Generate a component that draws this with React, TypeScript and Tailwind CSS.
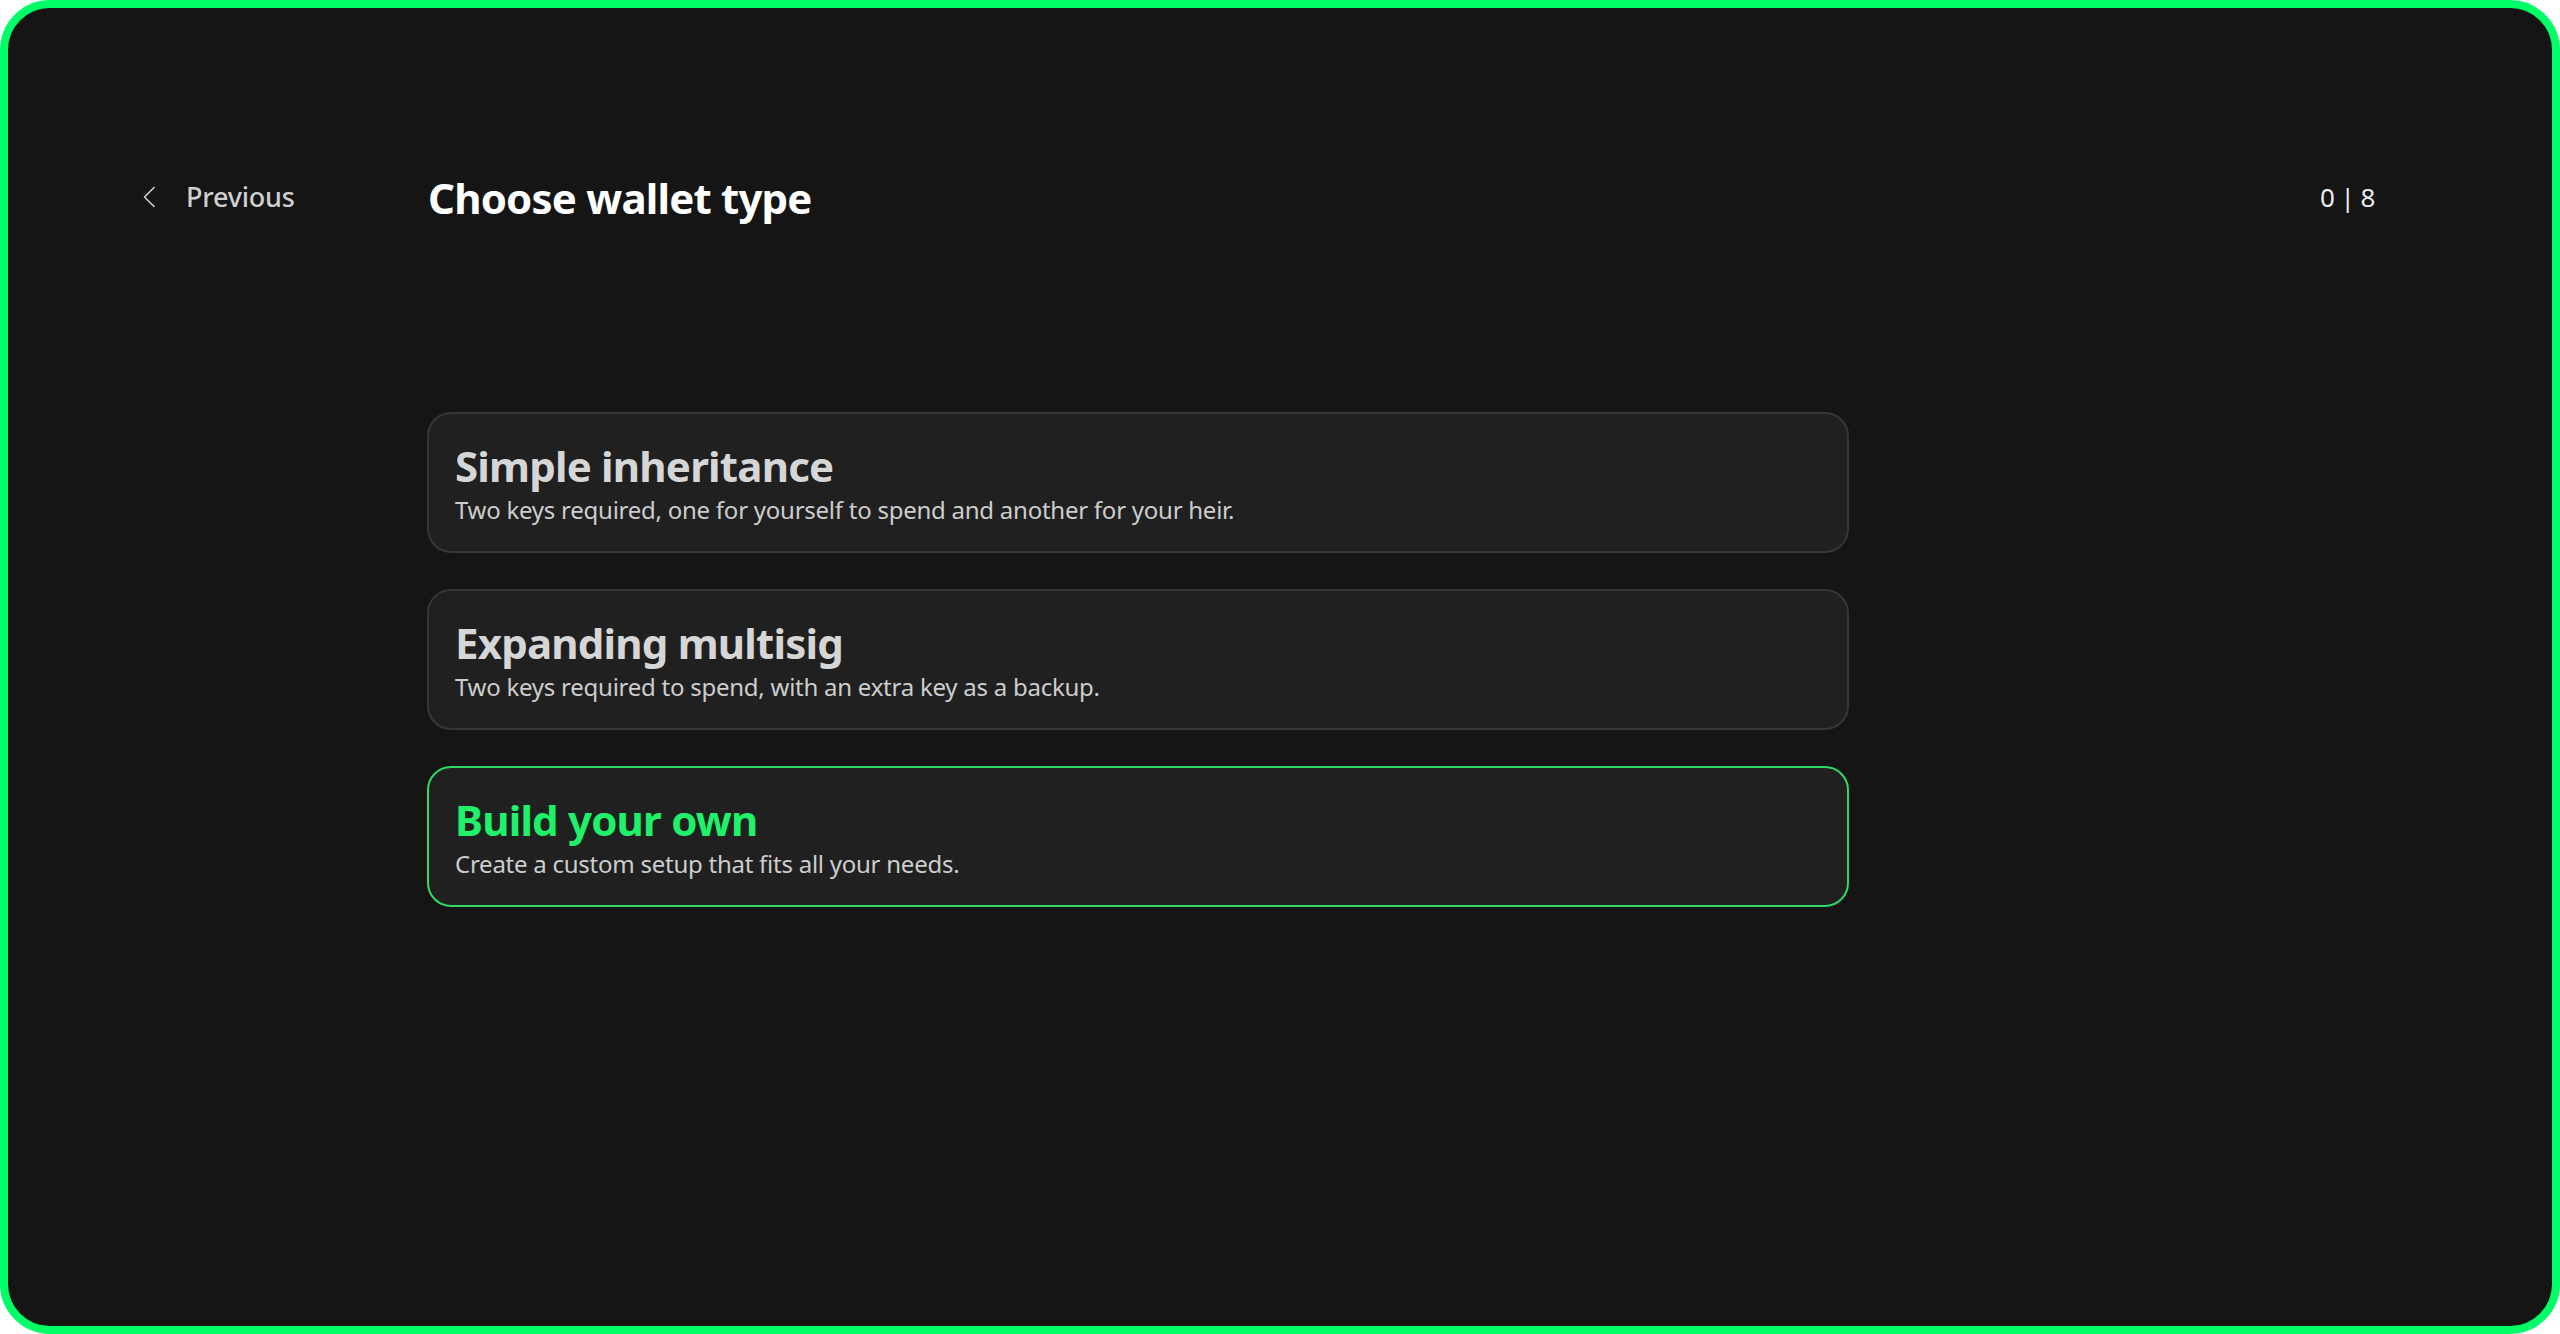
const options = [
  {
    title: "Simple inheritance",
    description:
      "Two keys required, one for yourself to spend and another for your heir.",
    active: false,
  },
  {
    title: "Expanding multisig",
    description: "Two keys required to spend, with an extra key as a backup.",
    active: false,
  },
  {
    title: "Build your own",
    description: "Create a custom setup that fits all your needs.",
    active: true,
  },
];

const App = () => {
  return (
    <div
      className="h-screen w-full bg-white"
      style={{ fontFamily: '"Noto Sans", "Open Sans", sans-serif' }}
    >
      <div className="h-full w-full rounded-[50px] border-[8px] border-[#00ff66] bg-[#151515] pl-[134px] pr-[177px] pt-[161px]">
        {/* Header */}
        <div className="flex h-[56px] items-center">
          <button className="flex w-[286px] items-center gap-[30px] text-[#cfcfcf]">
            <svg width="14" height="22" viewBox="0 0 14 22" fill="none">
              <path
                d="M12 1.5 2.5 11 12 20.5"
                stroke="currentColor"
                strokeWidth="1.6"
                strokeLinecap="round"
                strokeLinejoin="round"
              />
            </svg>
            <span className="text-[27px] font-medium tracking-[-0.2px]">
              Previous
            </span>
          </button>
          <h1 className="text-[42px] font-bold tracking-[-0.8px] text-white">
            Choose wallet type
          </h1>
          <div className="ml-auto text-[26px] tracking-[-0.5px] text-[#ededed]">
            0 | 8
          </div>
        </div>

        {/* Options */}
        <div className="ml-[285px] mt-[187px] flex w-[1422px] flex-col gap-[36px]">
          {options.map((option) => (
            <div
              key={option.title}
              className={
                option.active
                  ? "flex h-[141px] flex-col justify-center rounded-[24px] border-2 border-[#2fd867] bg-[#202020] px-[26px]"
                  : "flex h-[141px] flex-col justify-center rounded-[24px] border-2 border-[#363636] bg-[#202020] px-[26px]"
              }
            >
              <div
                className={
                  option.active
                    ? "text-[42px] font-bold leading-[52px] tracking-[-0.8px] text-[#1ff16a]"
                    : "text-[42px] font-bold leading-[52px] tracking-[-0.8px] text-[#d6d6d6]"
                }
              >
                {option.title}
              </div>
              <div className="mt-[2px] text-[24px] leading-[32px] tracking-[-0.25px] text-[#cdcdcd]">
                {option.description}
              </div>
            </div>
          ))}
        </div>
      </div>
    </div>
  );
};

export default App;
